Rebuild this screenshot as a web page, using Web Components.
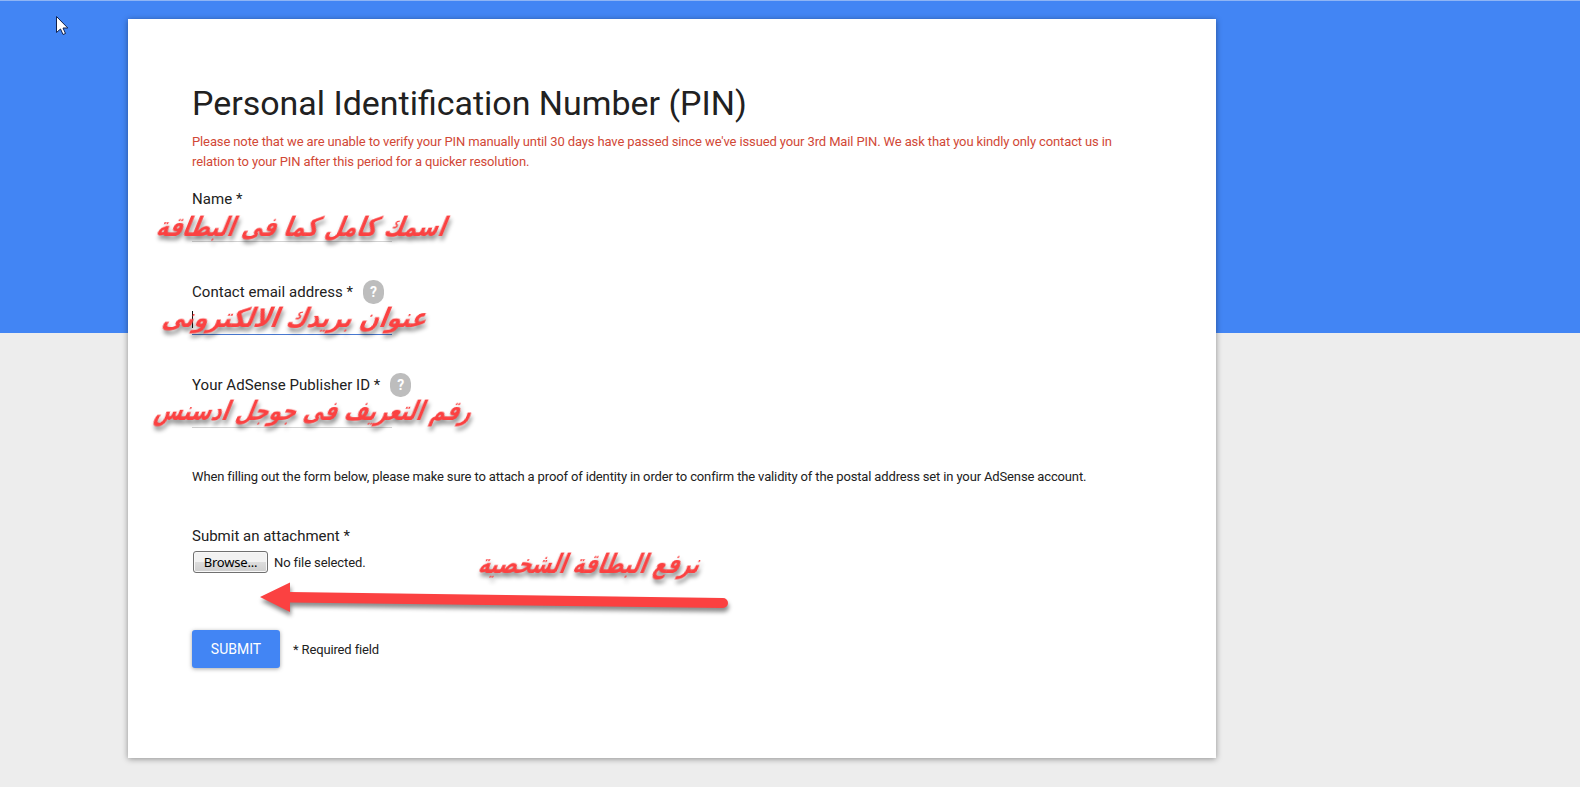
<!DOCTYPE html>
<html lang="en">
<head>
<meta charset="utf-8">
<title>Personal Identification Number (PIN)</title>
<style>
  body {
    margin: 0;
    height: 787px;
    overflow: hidden;
    background: #ededed;
    font-family: Roboto, "Liberation Sans", sans-serif;
    color: #212121;
  }
</style>
</head>
<body>
<pin-page>
  <form-card heading="Personal Identification Number (PIN)">
    <span slot="notice">Please note that we are unable to verify your PIN manually until 30 days have passed since we've issued your 3rd Mail PIN. We ask that you kindly only contact us in relation to your PIN after this period for a quicker resolution.</span>
    <text-field>Name *</text-field>
    <text-field help focused>Contact email address *</text-field>
    <text-field help>Your AdSense Publisher ID *</text-field>
    <form-note>When filling out the form below, please make sure to attach a proof of identity in order to confirm the validity of the postal address set in your AdSense account.</form-note>
    <file-field>Submit an attachment *</file-field>
    <submit-row label="SUBMIT">* Required field</submit-row>
  </form-card>
  <ink-layer slot="overlay"></ink-layer>
</pin-page>

<script>
class PinPage extends HTMLElement {
  constructor() {
    super();
    this.attachShadow({ mode: 'open' });
  }

  connectedCallback() {
    this.shadowRoot.innerHTML = `
      <style>
        :host {
          display: block;
          position: relative;
          box-sizing: border-box;
          height: 787px;
          padding: 18px 0 0 128px;
          border-top: 1px solid #8fb5f5;
          background: linear-gradient(#4285f4 332px, #ededed 332px);
        }
      </style>
      <slot></slot>
      <slot name="overlay"></slot>
    `;
  }
}

class FormCard extends HTMLElement {
  constructor() {
    super();
    this.attachShadow({ mode: 'open' });
  }

  connectedCallback() {
    this.shadowRoot.innerHTML = `
      <style>
        :host {
          display: block;
          box-sizing: border-box;
          width: 1088px;
          height: 739px;
          padding: 64px;
          background: #fff;
          box-shadow: 0 1px 6px rgba(0, 0, 0, 0.4);
        }

        h1 {
          margin: 0;
          padding-top: 1px;
          font-size: 33.95px;
          font-weight: 400;
          line-height: 40px;
          white-space: nowrap;
        }

        .notice {
          margin: 8px 0 17px;
          width: 930px;
          font-size: 13px;
          letter-spacing: -0.12px;
          line-height: 20px;
          color: #d14836;
        }
      </style>
      <h1>${this.getAttribute('heading')}</h1>
      <div class="notice"><slot name="notice"></slot></div>
      <slot></slot>
    `;
  }
}

class TextField extends HTMLElement {
  constructor() {
    super();
    this.attachShadow({ mode: 'open' });
  }

  connectedCallback() {
    const help = this.hasAttribute('help') ? '<span class="help">?</span>' : '';
    const caret = this.hasAttribute('focused') ? '<span class="caret"></span>' : '';
    this.shadowRoot.innerHTML = `
      <style>
        :host {
          display: block;
          height: 93px;
          font-size: 15px;
          letter-spacing: 0.04px;
        }

        .label {
          display: flex;
          align-items: center;
          gap: 10px;
          height: 20px;
          white-space: nowrap;
        }

        .help {
          width: 21px;
          height: 24px;
          border-radius: 10px;
          background: #bdbdbd;
          color: #fff;
          font-size: 14px;
          font-weight: 700;
          line-height: 24px;
          text-align: center;
        }

        .input {
          box-sizing: border-box;
          display: flex;
          align-items: flex-end;
          width: 200px;
          height: 33px;
          padding-bottom: 6px;
          border-bottom: 1px solid #d2d2d2;
        }

        :host([focused]) .input {
          border-color: #4878d0;
        }

        .caret {
          width: 1px;
          height: 17px;
          background: #111;
        }
      </style>
      <div class="label"><slot></slot>${help}</div>
      <div class="input">${caret}</div>
    `;
  }
}

class FormNote extends HTMLElement {
  constructor() {
    super();
    this.attachShadow({ mode: 'open' });
  }

  connectedCallback() {
    this.shadowRoot.innerHTML = `
      <style>
        :host {
          display: block;
          margin: -1px 0 39px;
          font-size: 13px;
          letter-spacing: -0.142px;
          line-height: 20px;
          white-space: nowrap;
        }
      </style>
      <slot></slot>
    `;
  }
}

class FileField extends HTMLElement {
  constructor() {
    super();
    this.attachShadow({ mode: 'open' });
  }

  connectedCallback() {
    this.shadowRoot.innerHTML = `
      <style>
        :host {
          display: block;
          height: 104px;
          font-size: 15px;
          line-height: 20px;
        }

        .row {
          display: flex;
          align-items: center;
          gap: 6px;
          margin: 5px 0 0 1px;
          font-size: 13px;
          letter-spacing: -0.1px;
        }

        .row span {
          padding-top: 2px;
        }

        button {
          box-sizing: border-box;
          width: 75px;
          height: 22px;
          padding: 0 0 1px;
          border: 1px solid #707070;
          border-radius: 3px;
          background: linear-gradient(#f2f2f2 48%, #dddddd 50%, #cfcfcf);
          box-shadow: inset 0 0 0 1px #f8f8f8;
          color: #000;
          font: 13px/18px "Noto Sans", "Open Sans", sans-serif;
          letter-spacing: -0.2px;
        }
      </style>
      <slot></slot>
      <div class="row"><button type="button">Browse...</button><span>No file selected.</span></div>
    `;
  }
}

class SubmitRow extends HTMLElement {
  constructor() {
    super();
    this.attachShadow({ mode: 'open' });
  }

  connectedCallback() {
    this.shadowRoot.innerHTML = `
      <style>
        :host {
          display: flex;
          align-items: center;
          gap: 13px;
          font-size: 13px;
          letter-spacing: -0.14px;
        }

        button {
          width: 88px;
          height: 38px;
          padding: 0;
          border: 0;
          border-radius: 3px;
          background: #4285f4;
          box-shadow: 0 1px 4px rgba(0, 0, 0, 0.35);
          color: #fff;
          font: 14px Roboto, sans-serif;
        }
      </style>
      <button type="button">${this.getAttribute('label')}</button>
      <slot></slot>
    `;
  }
}

// Red handwritten-style notes and the arrow drawn over the form
class InkLayer extends HTMLElement {
  constructor() {
    super();
    this.attachShadow({ mode: 'open' });
  }

  note(x, y, width, text) {
    return `<text transform="translate(${x} ${y}) skewX(-22)" textLength="${width}" lengthAdjust="spacingAndGlyphs">${text}</text>`;
  }

  connectedCallback() {
    this.shadowRoot.innerHTML = `
      <style>
        :host {
          display: block;
          position: absolute;
          top: -1px;
          left: 0;
          pointer-events: none;
        }

        svg {
          display: block;
        }

        .notes, .arrow {
          fill: #fb4141;
          filter: drop-shadow(1px 4px 2px rgba(0, 0, 0, 0.45));
        }

        text {
          font: 700 27px "DejaVu Sans", sans-serif;
        }
      </style>
      <svg width="1580" height="787" viewBox="0 0 1580 787">
        <g class="notes">
          ${this.note(155, 236, 289, 'اسمك كامل كما فى البطاقة')}
          ${this.note(161, 327, 264, 'عنوان بريدك الالكترونى')}
          ${this.note(153, 420, 317, 'رقم التعريف فى جوجل ادسنس')}
          ${this.note(477, 573, 221, 'نرفع البطاقة الشخصية')}
        </g>
        <path class="arrow" d="M260 597 L290 582.5 V592 L723 598 A5 5 0 0 1 723 608 L290 602.5 V612 Z"/>
        <path d="M56.5 16.5 V32.5 L60.5 29 L63 34.5 L65.5 33.5 L63 28 H67.8 Z" fill="#fff" stroke="#10214d"/>
      </svg>
    `;
  }
}

customElements.define('pin-page', PinPage);
customElements.define('form-card', FormCard);
customElements.define('text-field', TextField);
customElements.define('form-note', FormNote);
customElements.define('file-field', FileField);
customElements.define('submit-row', SubmitRow);
customElements.define('ink-layer', InkLayer);
</script>
</body>
</html>
